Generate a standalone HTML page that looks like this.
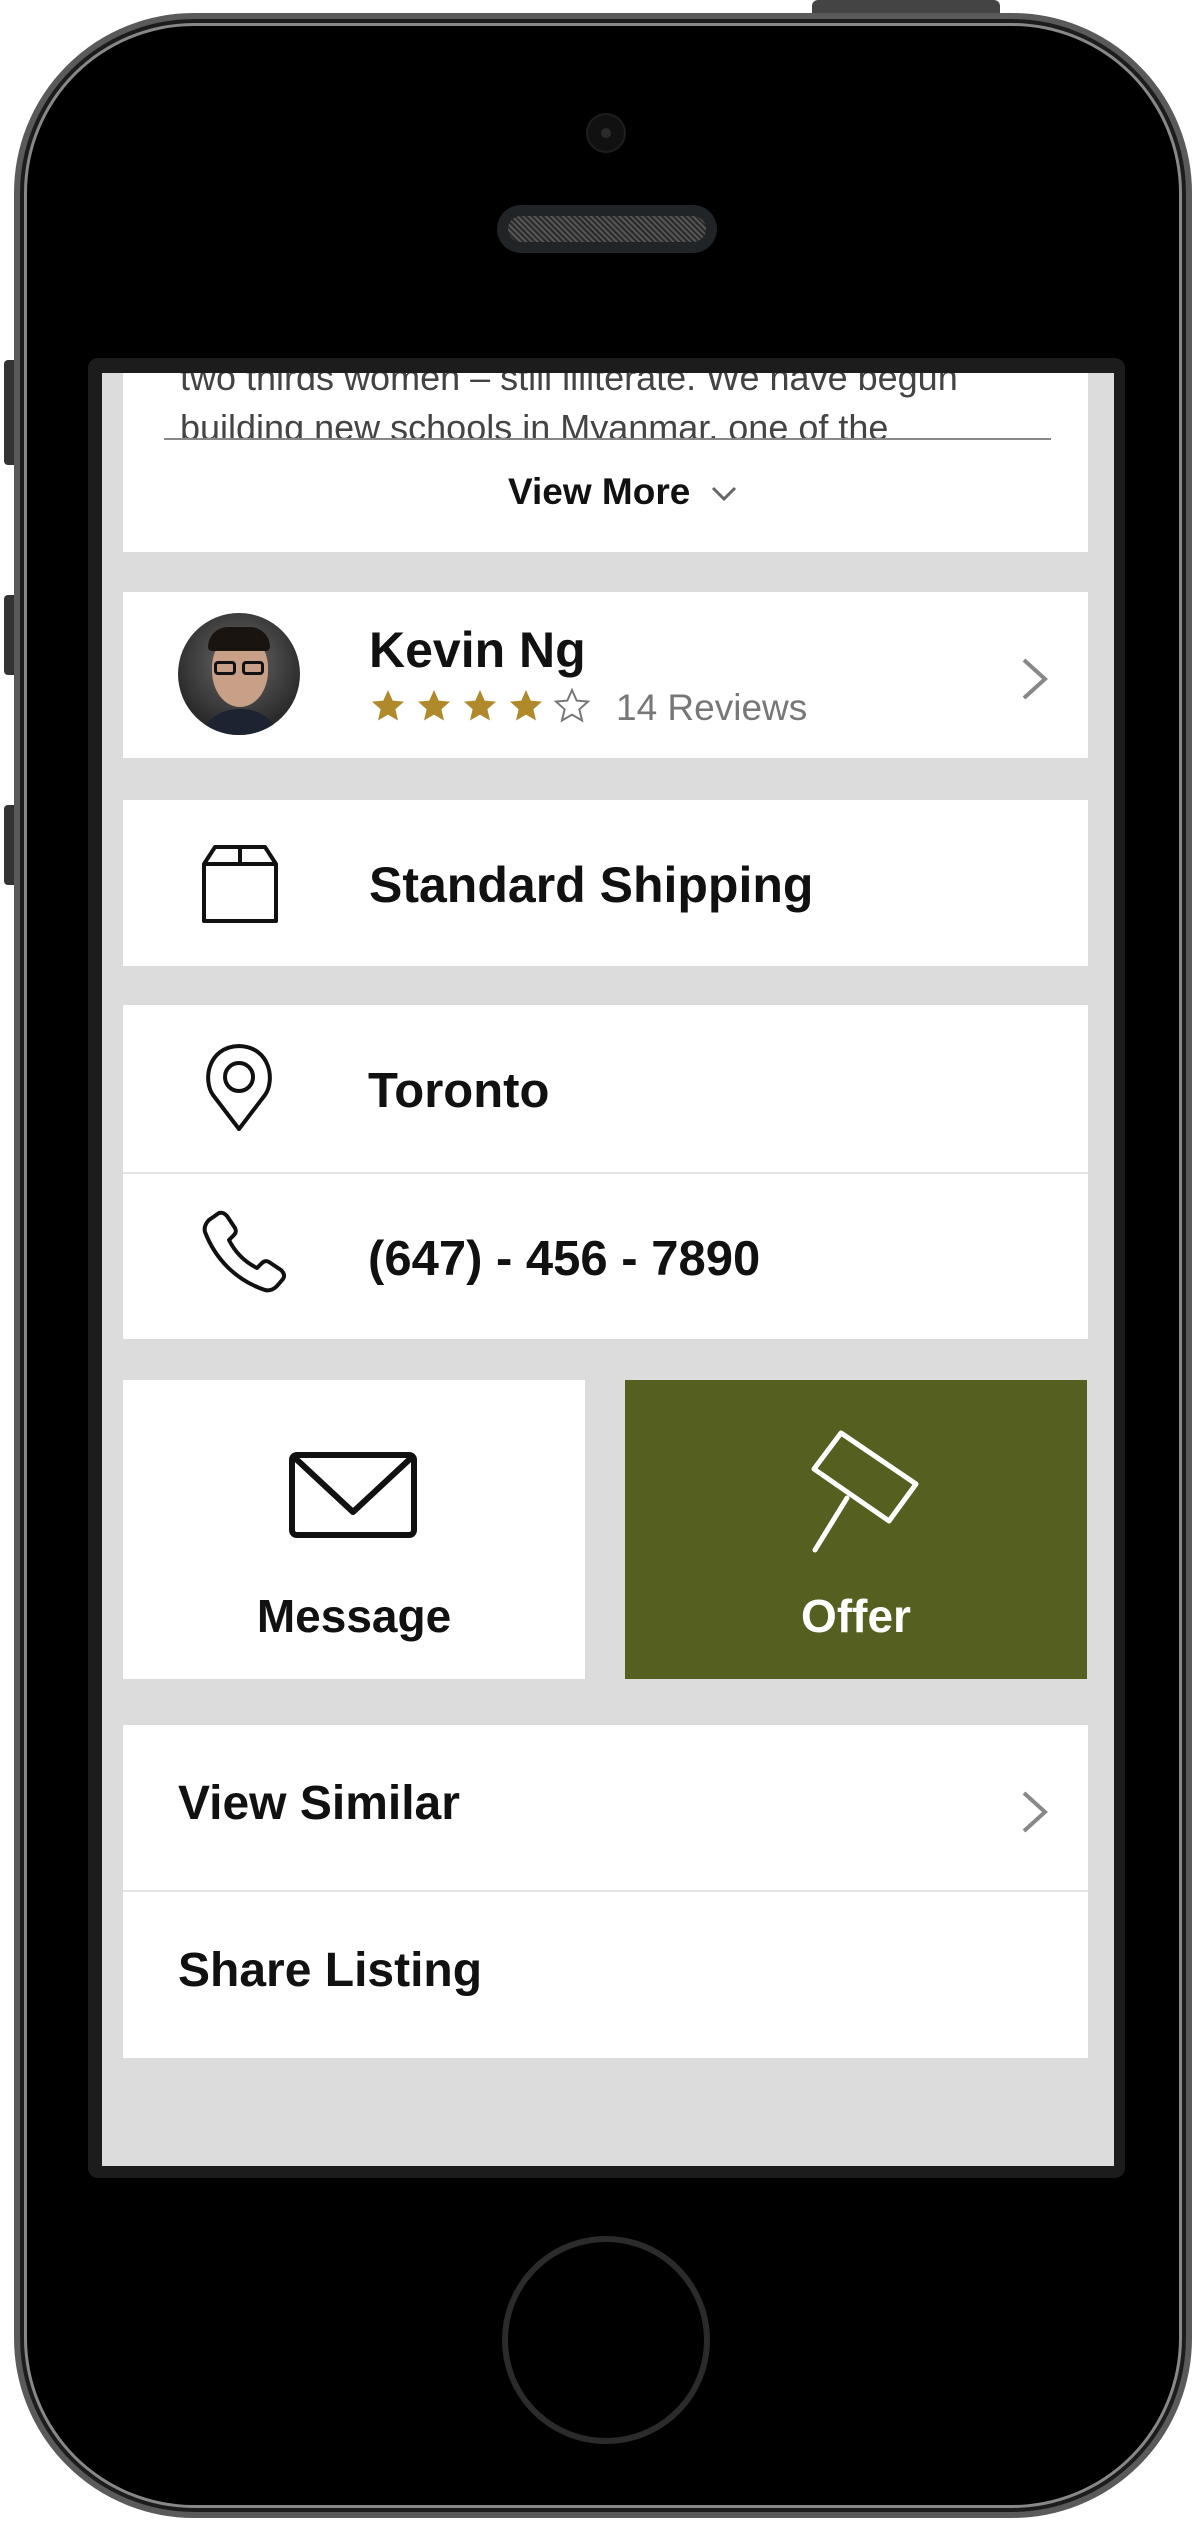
<!DOCTYPE html>
<html><head><meta charset="utf-8"><style>
*{margin:0;padding:0;box-sizing:border-box}
html,body{width:1202px;height:2522px;background:#fff;overflow:hidden;font-family:"Liberation Sans",sans-serif}
.abs{position:absolute}
.phone{left:14px;top:13px;width:1178px;height:2505px;border-radius:180px;background:#000;border:6px solid #5a5a5a;box-shadow:inset 0 0 0 4px #1c1c1c, inset 0 0 0 7px #888;}
.frame{left:88px;top:358px;width:1037px;height:1820px;background:#1c1c1c;border-radius:10px}
.screen{left:102px;top:373px;width:1012px;height:1793px;background:#dcdcdc;overflow:hidden}
.card{position:absolute;left:21px;width:965px;background:#fff}
.t{position:absolute;color:#111;font-weight:bold;white-space:nowrap;line-height:1}
</style></head><body>
<div class="abs" style="left:812px;top:0;width:188px;height:16px;background:#444;border-radius:6px 6px 0 0"></div>
<div class="abs" style="left:4px;top:360px;width:14px;height:105px;background:#333;border-radius:4px 0 0 4px"></div>
<div class="abs" style="left:4px;top:595px;width:14px;height:80px;background:#333;border-radius:4px 0 0 4px"></div>
<div class="abs" style="left:4px;top:805px;width:14px;height:80px;background:#333;border-radius:4px 0 0 4px"></div>
<div class="abs phone"></div>
<div class="abs" style="left:586px;top:113px;width:40px;height:40px;border-radius:50%;background:#111;border:2px solid #1e1e1e"></div>
<div class="abs" style="left:601px;top:128px;width:10px;height:10px;border-radius:50%;background:#2a2a2a"></div>
<div class="abs" style="left:497px;top:205px;width:220px;height:48px;border-radius:24px;background:#202426"></div>
<div class="abs" style="left:508px;top:216px;width:198px;height:26px;border-radius:13px;background:repeating-linear-gradient(45deg,#555 0 2px,#2a2a2a 2px 4px)"></div>
<div class="abs" style="left:502px;top:2236px;width:208px;height:208px;border-radius:50%;border:6px solid #2b2b2b"></div>
<div class="abs frame"></div>
<div class="abs screen">
  <div class="card" style="top:-10px;height:189px;overflow:hidden">
    <div class="abs" style="left:57px;top:-10px;width:900px;color:#444;font-size:36px;line-height:50px">two thirds women – still illiterate. We have begun<br>building new schools in Myanmar, one of the</div>
    <div class="abs" style="left:0;top:75px;width:965px;height:100px;background:#fff"></div>
    <div class="abs" style="left:41px;top:75px;width:887px;height:2px;background:#888"></div>
    <div class="t" style="left:385px;top:110px;font-size:37px">View More</div>
    <svg class="abs" style="left:587px;top:122px" width="28" height="18"><path d="M3 3 L14 14 L25 3" stroke="#666" stroke-width="3" fill="none"/></svg>
  </div>
  <div class="card" style="top:219px;height:166px">
    <div class="abs" style="left:55px;top:21px;width:122px;height:122px;border-radius:50%;overflow:hidden;background:radial-gradient(circle at 50% 40%,#6a6a6a,#2b2b2b 70%)">
      <div class="abs" style="left:34px;top:22px;width:56px;height:72px;border-radius:45% 45% 50% 50%;background:#c8a088"></div>
      <div class="abs" style="left:30px;top:14px;width:62px;height:24px;border-radius:30px 30px 6px 6px;background:#1a1410"></div>
      <div class="abs" style="left:36px;top:48px;width:22px;height:14px;border:3px solid #111;border-radius:4px"></div>
      <div class="abs" style="left:64px;top:48px;width:22px;height:14px;border:3px solid #111;border-radius:4px"></div>
      <div class="abs" style="left:20px;top:96px;width:84px;height:40px;border-radius:40px 40px 0 0;background:#1d2330"></div>
    </div>
    <div class="t" style="left:246px;top:33px;font-size:50px">Kevin Ng</div>
    <svg class="abs" style="left:247px;top:96px" width="230" height="40">
      <defs><path id="s" d="M18 2 L22.7 12.6 L34 13.6 L25.4 21.3 L28 32.5 L18 26.6 L8 32.5 L10.6 21.3 L2 13.6 L13.3 12.6 Z"/></defs>
      <use href="#s" fill="#b08a2a"/><use href="#s" x="46" fill="#b08a2a"/><use href="#s" x="92" fill="#b08a2a"/><use href="#s" x="138" fill="#b08a2a"/><use href="#s" x="184" fill="none" stroke="#777" stroke-width="2"/>
    </svg>
    <div class="abs" style="left:493px;top:96px;font-size:37px;color:#777;line-height:40px">14 Reviews</div>
    <svg class="abs" style="left:895px;top:64px" width="34" height="46"><path d="M6 4 L27 23 L6 42" stroke="#888" stroke-width="4" fill="none"/></svg>
  </div>
  <div class="card" style="top:427px;height:166px">
    <svg class="abs" style="left:78px;top:44px" width="78" height="80"><g stroke="#111" stroke-width="4" fill="none" stroke-linejoin="round"><path d="M3 20 L3 77 L75 77 L75 20 L64 3 L14 3 Z"/><path d="M3 20 L75 20 M39 3 L39 20"/></g></svg>
    <div class="t" style="left:246px;top:60px;font-size:50px">Standard Shipping</div>
  </div>
  <div class="card" style="top:632px;height:334px">
    <svg class="abs" style="left:82px;top:38px" width="68" height="90"><g stroke="#111" stroke-width="4" fill="none"><path d="M34 86 L8 52 C-2 38 2 4 34 3 C66 4 70 38 60 52 Z" stroke-linejoin="round"/><circle cx="34" cy="34" r="14"/></g></svg>
    <div class="t" style="left:245px;top:62px;font-size:49px">Toronto</div>
    <div class="abs" style="left:0;top:167px;width:965px;height:2px;background:#e3e3e3"></div>
    <svg class="abs" style="left:72px;top:205px" width="92" height="92"><path d="M24 3 C28 2 30 4 32 6 L40 18 C42 22 40 24 38 26 L34 30 C40 42 50 52 62 58 L66 54 C68 52 70 50 74 52 L86 60 C89 63 90 66 88 69 L82 76 C78 80 74 81 70 80 C40 70 20 48 10 22 C9 18 10 14 14 10 Z" stroke="#111" stroke-width="4" fill="none" stroke-linejoin="round"/></svg>
    <div class="t" style="left:245px;top:230px;font-size:49px">(647) - 456 - 7890</div>
  </div>
  <div class="card" style="top:1007px;width:462px;height:299px">
    <svg class="abs" style="left:166px;top:72px" width="128" height="86"><path d="M8 3 L120 3 C123 3 125 5 125 8 L125 78 C125 81 123 83 120 83 L8 83 C5 83 3 81 3 78 L3 8 C3 5 5 3 8 3 Z M6 6 L64 60 L122 6" stroke="#111" stroke-width="6" fill="none" stroke-linejoin="round"/></svg>
    <div class="t" style="left:0;width:462px;text-align:center;top:213px;font-size:46px">Message</div>
  </div>
  <div class="card" style="top:1007px;left:523px;width:462px;height:299px;background:#556020">
    <svg class="abs" style="left:0;top:0" width="462" height="299"><g stroke="#fff" stroke-width="5" fill="none" stroke-linejoin="round" stroke-linecap="round"><path d="M216 53 L291 104 L264 141 L189 89 Z"/><path d="M222 118 L190 170"/></g></svg>
    <div class="t" style="left:0;width:462px;text-align:center;top:213px;font-size:46px;color:#fff">Offer</div>
  </div>
  <div class="card" style="top:1352px;height:333px">
    <div class="t" style="left:55px;top:55px;font-size:48px">View Similar</div>
    <svg class="abs" style="left:895px;top:64px" width="34" height="46"><path d="M6 4 L27 23 L6 42" stroke="#888" stroke-width="4" fill="none"/></svg>
    <div class="abs" style="left:0;top:165px;width:965px;height:2px;background:#e3e3e3"></div>
    <div class="t" style="left:55px;top:222px;font-size:48px">Share Listing</div>
  </div>
</div>
</body></html>
